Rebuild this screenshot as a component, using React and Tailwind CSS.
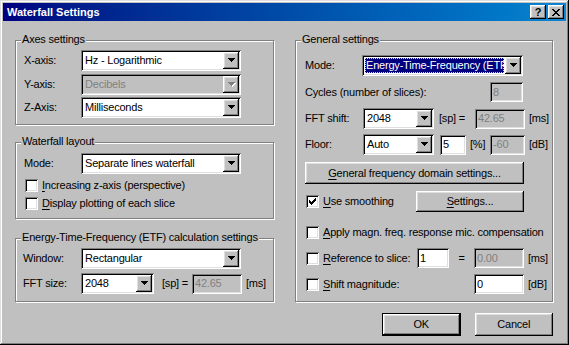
import React from "react";

const sunken =
  "shadow-[inset_1px_1px_0_#808080,inset_-1px_-1px_0_#ffffff,inset_2px_2px_0_#000000,inset_-2px_-2px_0_#dfdfdf]";
const raised =
  "shadow-[inset_-1px_-1px_0_#000000,inset_1px_1px_0_#ffffff,inset_-2px_-2px_0_#808080,inset_2px_2px_0_#dfdfdf]";
const etched = "border border-[#808080] shadow-[1px_1px_0_#ffffff,inset_1px_1px_0_#ffffff]";

function Arrow({ disabled }) {
  const d = "M0 0h7v1H0zM1 1h5v1H1zM2 2h3v1H2zM3 3h1v1H3z";
  return (
    <svg width="8" height="5" className="block">
      {disabled && <path d={d} fill="#ffffff" transform="translate(1 1)" />}
      <path d={d} fill={disabled ? "#808080" : "#000000"} />
    </svg>
  );
}

function Combo({ className, value, disabled, selected }) {
  return (
    <div
      className={`${className} h-[21px] p-[2px] flex shrink-0 ${
        disabled ? "bg-[#c0c0c0]" : "bg-white"
      } ${sunken}`}
    >
      <div className="flex-1 min-w-0 p-[1px] flex overflow-hidden">
        <span
          className={`flex-1 pl-[1px] leading-[15px] whitespace-nowrap overflow-hidden ${
            selected
              ? "bg-[#000080] text-white outline-1 outline-dotted outline-[#e8e070] -outline-offset-1"
              : ""
          } ${disabled ? "text-[#808080]" : ""}`}
        >
          {value}
        </span>
      </div>
      <div
        className={`w-[16px] h-[17px] shrink-0 flex items-center justify-center pl-[1px] bg-[#c0c0c0] ${raised}`}
      >
        <Arrow disabled={disabled} />
      </div>
    </div>
  );
}

function Edit({ className, value, disabled }) {
  return (
    <div
      className={`${className} h-[20px] p-[2px] pl-[3px] shrink-0 flex items-center leading-[15px] ${
        disabled ? "bg-[#c0c0c0] text-[#808080]" : "bg-white"
      } ${sunken}`}
    >
      {value}
    </div>
  );
}

function Check({ checked }) {
  return (
    <div className={`w-[13px] h-[13px] shrink-0 bg-white relative ${sunken}`}>
      {checked && (
        <svg width="7" height="7" className="absolute left-[3px] top-[3px]">
          <path
            d="M6 0h1v3H6zM5 1h1v3H5zM4 2h1v3H4zM0 2h1v3H0zM1 3h1v3H1zM2 4h1v3H2zM3 3h1v3H3z"
            fill="#000000"
          />
        </svg>
      )}
    </div>
  );
}

function Btn({ className, children, isDefault }) {
  if (isDefault) {
    return (
      <div className={`${className} border border-black flex`}>
        <div className={`flex-1 flex items-center justify-center bg-[#c0c0c0] ${raised}`}>
          {children}
        </div>
      </div>
    );
  }
  return (
    <div className={`${className} flex items-center justify-center bg-[#c0c0c0] ${raised}`}>
      {children}
    </div>
  );
}

function Group({ className, title, children }) {
  return (
    <div className={`relative ${etched} ${className}`}>
      <span className="absolute left-[5px] top-[-8px] px-[1px] bg-[#c0c0c0] leading-[13px] whitespace-nowrap">
        {title}
      </span>
      {children}
    </div>
  );
}

function U({ children }) {
  return <span className="underline underline-offset-[2px]">{children}</span>;
}

export default function App() {
  return (
    <div className="w-[569px] h-[345px] overflow-hidden bg-white">
      <div
        className={`w-[569px] h-[345px] p-[3px] flex flex-col bg-[#c0c0c0] text-black text-[11px] tracking-[-0.2px] whitespace-nowrap font-['Liberation_Sans',Arial,sans-serif] shadow-[inset_-1px_-1px_0_#000000,inset_1px_1px_0_#dfdfdf,inset_-2px_-2px_0_#808080,inset_2px_2px_0_#ffffff]`}
      >
        {/* title bar */}
        <div className="h-[18px] shrink-0 flex items-center pl-[4px] pr-[2px] bg-gradient-to-r from-[#000080] to-[#1084d0]">
          <span className="flex-1 text-white font-bold text-[11px] tracking-normal leading-[14px]">
            Waterfall Settings
          </span>
          <div className={`w-[16px] h-[14px] flex items-center justify-center bg-[#c0c0c0] ${raised}`}>
            <span className="font-bold text-[11px] leading-[11px] text-black">?</span>
          </div>
          <div className={`w-[16px] h-[14px] ml-[2px] flex items-center justify-center bg-[#c0c0c0] ${raised}`}>
            <svg width="8" height="7" className="block">
              <path
                d="M0 0h2v1H0zM6 0h2v1H6zM1 1h2v1H1zM5 1h2v1H5zM2 2h4v1H2zM3 3h2v1H3zM2 4h4v1H2zM1 5h2v1H1zM5 5h2v1H5zM0 6h2v1H0zM6 6h2v1H6z"
                fill="#000000"
              />
            </svg>
          </div>
        </div>

        {/* body */}
        <div className="flex pl-[12px] pt-[19px]">
          {/* left column */}
          <div className="w-[259px] flex flex-col shrink-0">
            <Group className="h-[85px] pt-[9px] pl-[8px]" title="Axes settings">
              <div className="flex flex-col">
                <div className="flex items-center">
                  <span className="w-[57px]">X-axis:</span>
                  <Combo className="w-[160px]" value="Hz - Logarithmic" />
                </div>
                <div className="flex items-center mt-[3px]">
                  <span className="w-[57px]">Y-axis:</span>
                  <Combo className="w-[160px]" value="Decibels" disabled />
                </div>
                <div className="flex items-center mt-[2px]">
                  <span className="w-[57px]">Z-Axis:</span>
                  <Combo className="w-[160px]" value="Milliseconds" />
                </div>
              </div>
            </Group>

            <Group className="h-[77px] mt-[17px] pt-[10px] pl-[8px]" title="Waterfall layout">
              <div className="flex items-center">
                <span className="w-[57px]">Mode:</span>
                <Combo className="w-[160px]" value="Separate lines waterfall" />
              </div>
              <div className="flex items-center h-[13px] mt-[5px] ml-[1px]">
                <Check />
                <span className="ml-[4px]">
                  <U>I</U>ncreasing z-axis (perspective)
                </span>
              </div>
              <div className="flex items-center h-[13px] mt-[5px] ml-[1px]">
                <Check />
                <span className="ml-[4px]">
                  <U>D</U>isplay plotting of each slice
                </span>
              </div>
            </Group>

            <Group
              className="h-[64px] mt-[19px] pt-[9px] pl-[7px]"
              title="Energy-Time-Frequency (ETF) calculation settings"
            >
              <div className="flex items-center">
                <span className="w-[58px]">Window:</span>
                <Combo className="w-[160px]" value="Rectangular" />
              </div>
              <div className="flex items-center mt-[4px]">
                <span className="w-[58px]">FFT size:</span>
                <Combo className="w-[73px]" value="2048" />
                <span className="ml-[8px] w-[30px]">[sp] =</span>
                <Edit className="w-[50px]" value="42.65" disabled />
                <span className="ml-[4px]">[ms]</span>
              </div>
            </Group>
          </div>

          {/* right column */}
          <div className="w-[258px] ml-[21px] flex flex-col shrink-0">
            <Group className="h-[262px] pt-[14px] pl-[9px]" title="General settings">
              <div className="flex items-center">
                <span className="w-[57px]">Mode:</span>
                <Combo className="w-[161px]" value="Energy-Time-Frequency (ETF)" selected />
              </div>
              <div className="flex items-center w-[218px] mt-[6px]">
                <span className="flex-1">Cycles (number of slices):</span>
                <Edit className="w-[33px]" value="8" disabled />
              </div>
              <div className="flex items-center mt-[6px]">
                <span className="w-[58px]">FFT shift:</span>
                <Combo className="w-[71px]" value="2048" />
                <span className="ml-[5px] w-[36px]">[sp] =</span>
                <Edit className="w-[50px]" value="42.65" disabled />
                <span className="ml-[4px]">[ms]</span>
              </div>
              <div className="flex items-center mt-[5px]">
                <span className="w-[58px]">Floor:</span>
                <Combo className="w-[71px]" value="Auto" />
                <Edit className="w-[26px] ml-[6px]" value="5" />
                <span className="ml-[4px] w-[20px]">[%]</span>
                <Edit className="w-[35px]" value="-60" disabled />
                <span className="ml-[4px]">[dB]</span>
              </div>
              <Btn className="w-[219px] h-[22px] mt-[7px]">
                <span>
                  <U>G</U>eneral frequency domain settings...
                </span>
              </Btn>
              <div className="flex items-center w-[219px] h-[21px] mt-[7px]">
                <div className="ml-[1px]">
                  <Check checked />
                </div>
                <span className="ml-[4px]">
                  <U>U</U>se smoothing
                </span>
                <Btn className="w-[108px] h-[21px] ml-auto">
                  <span>
                    <U>S</U>ettings...
                  </span>
                </Btn>
              </div>
              <div className="flex items-center h-[13px] mt-[14px] ml-[1px]">
                <Check />
                <span className="ml-[4px]">
                  <U>A</U>pply magn. freq. response mic. compensation
                </span>
              </div>
              <div className="flex items-center h-[20px] mt-[9px]">
                <div className="ml-[1px]">
                  <Check />
                </div>
                <span className="ml-[4px] w-[94px]">
                  <U>R</U>eference to slice:
                </span>
                <Edit className="w-[32px]" value="1" />
                <span className="w-[25px] text-center">=</span>
                <Edit className="w-[50px]" value="0.00" disabled />
                <span className="ml-[4px]">[ms]</span>
              </div>
              <div className="flex items-center h-[20px] mt-[6px]">
                <div className="ml-[1px]">
                  <Check />
                </div>
                <span className="ml-[4px] w-[151px]">
                  <U>S</U>hift magnitude:
                </span>
                <Edit className="w-[50px]" value="0" />
                <span className="ml-[4px]">[dB]</span>
              </div>
            </Group>

            <div className="flex pl-[87px] gap-[14px] mt-[11px]">
              <Btn className="w-[80px] h-[23px]" isDefault>
                OK
              </Btn>
              <Btn className="w-[80px] h-[23px]">Cancel</Btn>
            </div>
          </div>
        </div>
      </div>
    </div>
  );
}
